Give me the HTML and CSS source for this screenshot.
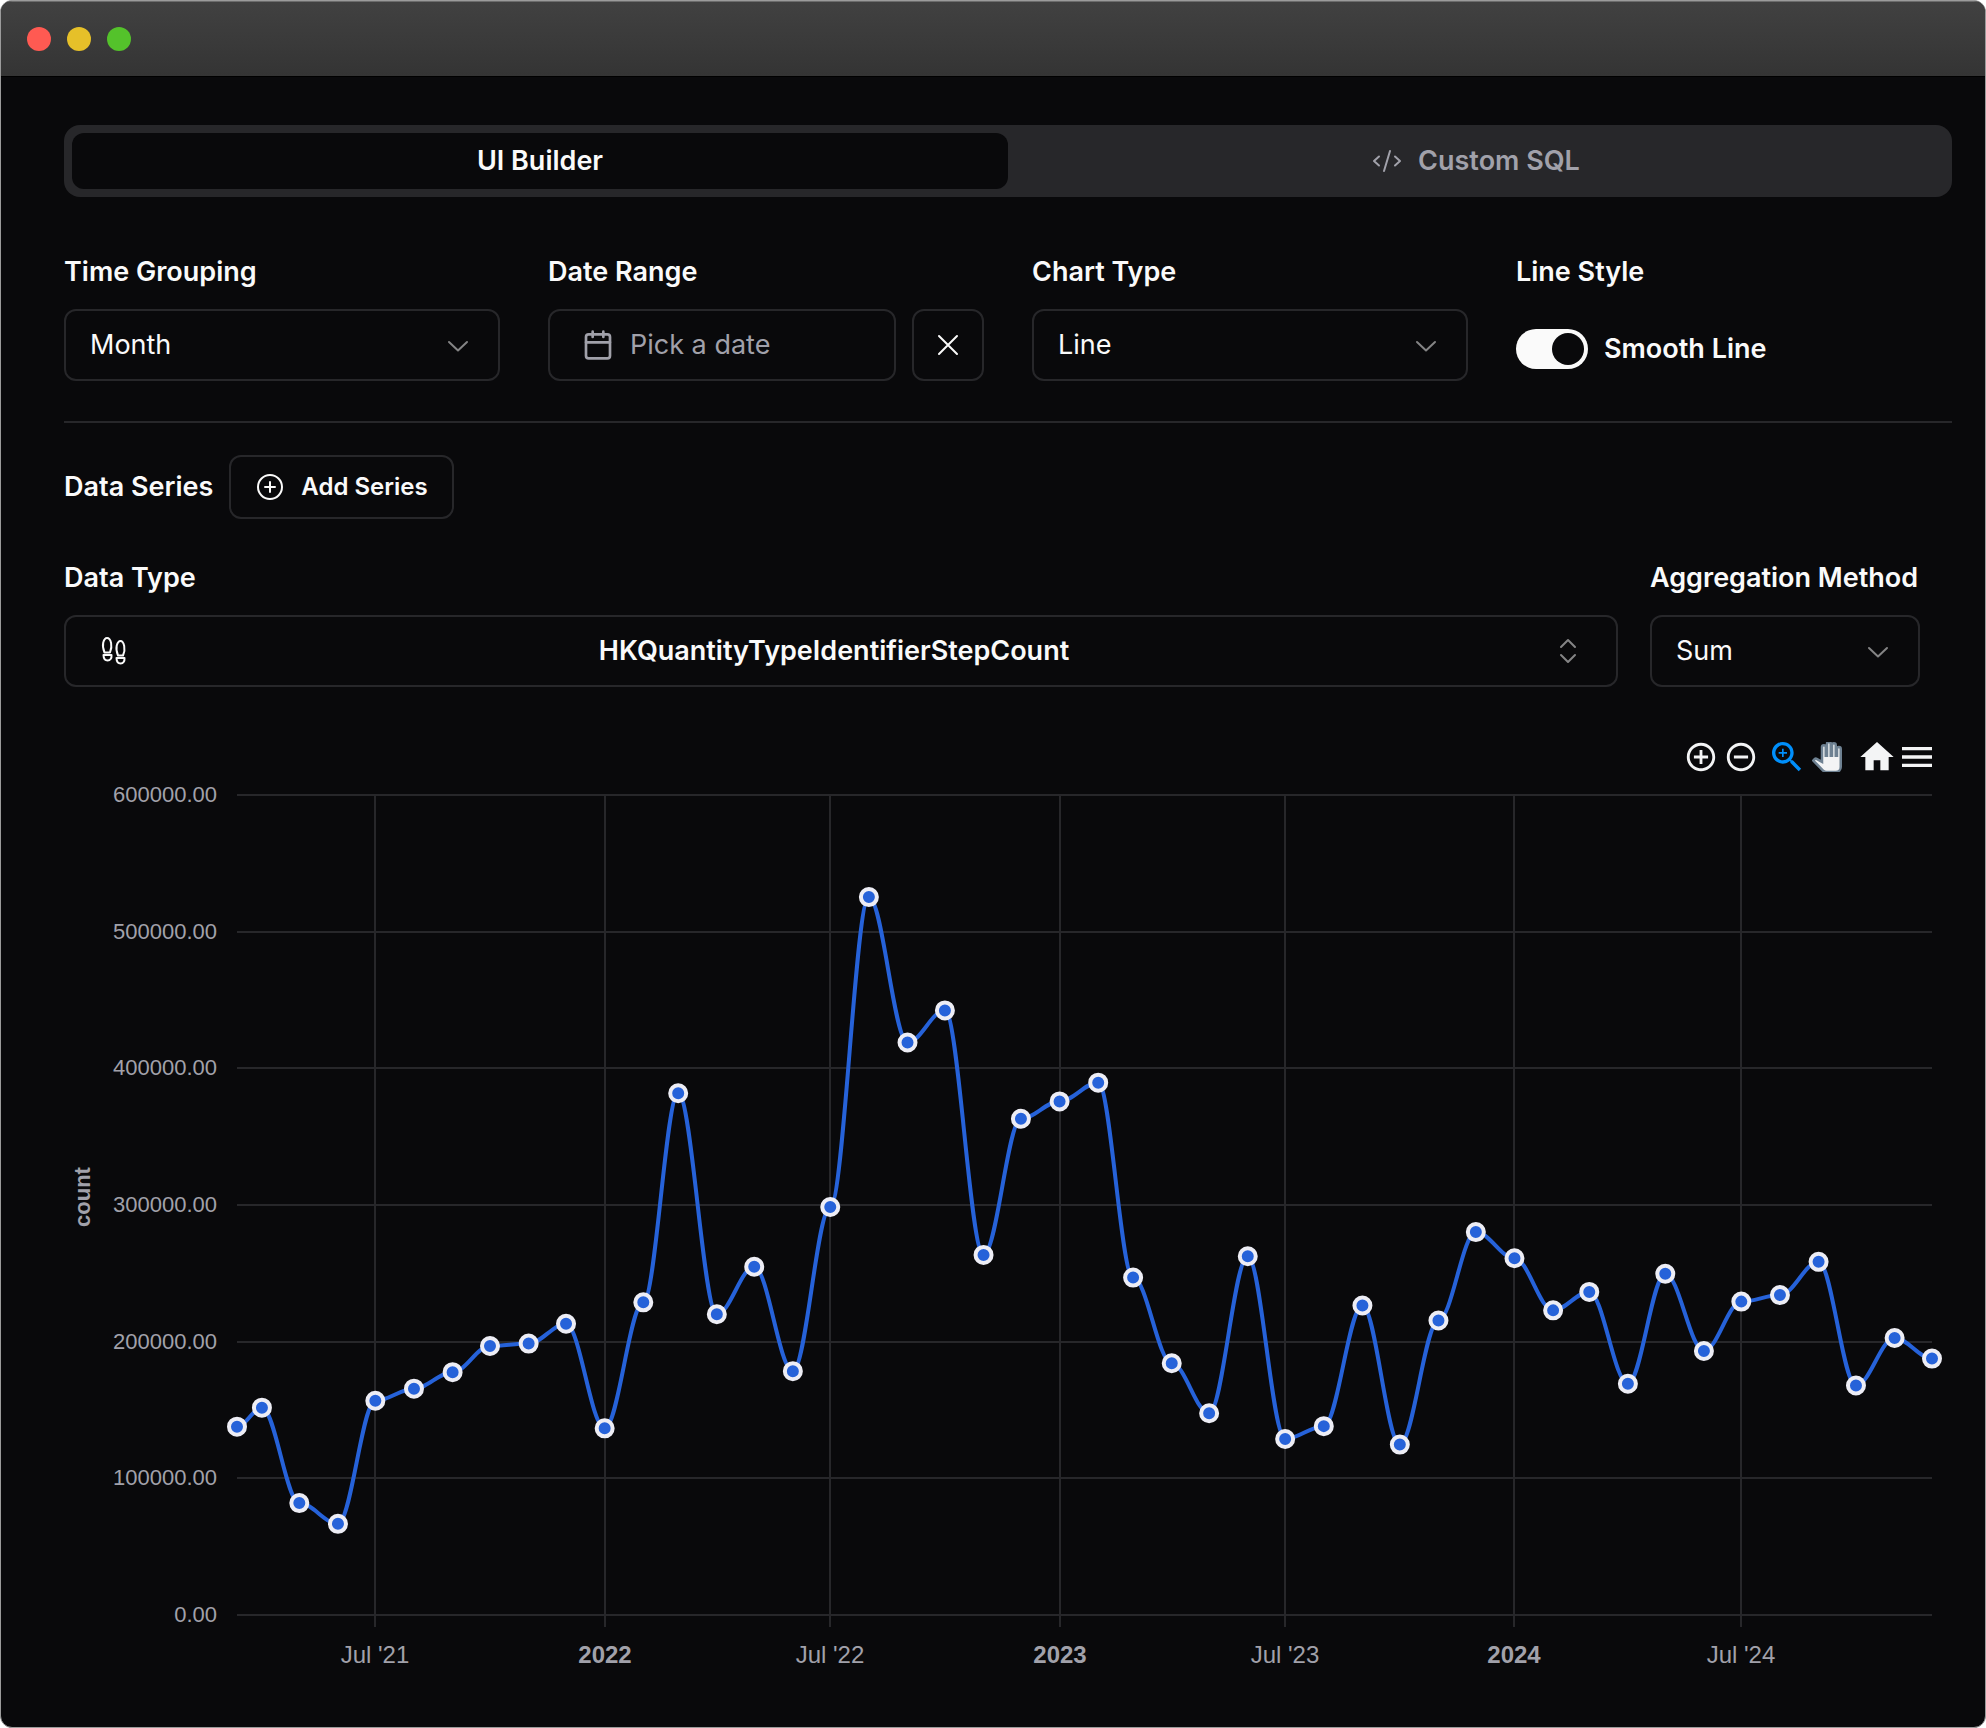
FILE: index.html
```html
<!DOCTYPE html>
<html lang="en">
<head>
<meta charset="utf-8">
<meta name="viewport" content="width=device-width, initial-scale=1">
<title>Chart Builder</title>
<link rel="stylesheet" href="styles.css">
</head>
<body>
<div class="window">
  <header class="titlebar">
    <button class="light light-close" type="button" aria-label="Close"></button>
    <button class="light light-minimize" type="button" aria-label="Minimize"></button>
    <button class="light light-zoom" type="button" aria-label="Zoom"></button>
  </header>

  <main class="content">
    <div class="tabs" role="tablist">
      <button class="tab tab-active" type="button" role="tab" aria-selected="true">UI Builder</button>
      <button class="tab" type="button" role="tab" aria-selected="false">
        <svg class="icon-30" viewBox="0 0 30 30" fill="none" stroke="currentColor" stroke-width="2" stroke-linecap="round" stroke-linejoin="round" aria-hidden="true"><path d="M7 10.500 2 15l5 4.500M23 10.500 28 15l-5 4.500M18 5 12 25"/></svg>
        Custom SQL
      </button>
    </div>

    <div class="options">
      <div class="field">
        <label class="label" for="grouping">Time Grouping</label>
        <div class="select-wrap">
          <select class="select" id="grouping"><option>Month</option></select>
          <svg class="chevron" viewBox="0 0 30 30" aria-hidden="true"><path d="m6 12 9 8.500 9-8.500"/></svg>
        </div>
      </div>
      <div class="field">
        <label class="label" for="range">Date Range</label>
        <div class="date-row">
          <button class="box date-button" id="range" type="button">
            <svg class="icon-32" viewBox="0 0 24 24" fill="none" stroke="currentColor" stroke-width="2" stroke-linecap="round" stroke-linejoin="round" aria-hidden="true"><rect x="3" y="4" width="18" height="18" rx="2"/><path d="M8 2v4M16 2v4M3 10h18"/></svg>
            Pick a date
          </button>
          <button class="box clear-button" type="button" aria-label="Clear date range">
            <svg class="icon-30" viewBox="0 0 30 30" fill="none" stroke="currentColor" stroke-width="2" stroke-linecap="round" aria-hidden="true"><path d="m6 6 18 18M24 6 6 24"/></svg>
          </button>
        </div>
      </div>
      <div class="field">
        <label class="label" for="chart-type">Chart Type</label>
        <div class="select-wrap">
          <select class="select" id="chart-type"><option>Line</option></select>
          <svg class="chevron" viewBox="0 0 30 30" aria-hidden="true"><path d="m6 12 9 8.500 9-8.500"/></svg>
        </div>
      </div>
      <div class="field">
        <span class="label">Line Style</span>
        <div class="switch-row">
          <input class="switch" id="smooth" type="checkbox" role="switch" checked>
          <label class="label" for="smooth">Smooth Line</label>
        </div>
      </div>
    </div>

    <hr class="divider">

    <div class="series-head">
      <span class="label">Data Series</span>
      <button class="box add-button" type="button">
        <svg class="icon-30" viewBox="0 0 30 30" fill="none" stroke="currentColor" stroke-width="2" stroke-linecap="round" aria-hidden="true"><circle cx="15" cy="15" r="12"/><path d="M15 10v10M10 15h10"/></svg>
        Add Series
      </button>
    </div>

    <div class="series-row">
      <div class="field">
        <label class="label" for="data-type">Data Type</label>
        <button class="box type-button" id="data-type" type="button" role="combobox" aria-expanded="false">
          <svg class="icon-32" viewBox="0 0 32 32" fill="none" stroke="currentColor" stroke-width="2" stroke-linejoin="round" aria-hidden="true">
            <path d="M6.500 17.500C5 14 4.500 11 5.200 7.800 6 4.600 7.400 3 9 3s3.400 1.800 4.100 5c.7 3.200.2 6.200-1.100 9.500z"/>
            <path d="M5.500 20h8c.3 3.400-1.200 5.500-3.900 5.500-2.600 0-4-2-4.100-5.500z"/>
            <path d="M20 20.500c-1.500-3.500-2-6.500-1.300-9.700C19.500 7.600 20.900 6 22.500 6s3 1.800 3.700 5c.7 3.200.2 6.200-1.200 9.500z"/>
            <path d="M18.500 23h8c.2 3.400-1.200 5.500-3.900 5.500-2.600 0-4-2-4.100-5.500z"/>
          </svg>
          <span>HKQuantityTypeIdentifierStepCount</span>
          <svg class="sort-icon" viewBox="0 0 30 30" aria-hidden="true"><path d="m7 11 7-7 7 7M7 19l7 7 7-7"/></svg>
        </button>
      </div>
      <div class="field">
        <label class="label" for="aggregation">Aggregation Method</label>
        <div class="select-wrap">
          <select class="select" id="aggregation"><option>Sum</option></select>
          <svg class="chevron" viewBox="0 0 30 30" aria-hidden="true"><path d="m6 12 9 8.500 9-8.500"/></svg>
        </div>
      </div>
    </div>

    <div class="toolbar">
      <div class="tool-group">
        <button class="tool" type="button" aria-label="Zoom in"><svg class="icon-34" viewBox="0 0 24 24"><path d="M13 7h-2v4H7v2h4v4h2v-4h4v-2h-4V7zm-1-5C6.480 2 2 6.480 2 12s4.480 10 10 10 10-4.480 10-10S17.520 2 12 2zm0 18c-4.410 0-8-3.590-8-8s3.590-8 8-8 8 3.590 8 8-3.590 8-8 8z"/></svg></button>
        <button class="tool" type="button" aria-label="Zoom out"><svg class="icon-34" viewBox="0 0 24 24"><path d="M7 11v2h10v-2H7zm5-9C6.480 2 2 6.480 2 12s4.480 10 10 10 10-4.480 10-10S17.520 2 12 2zm0 18c-4.410 0-8-3.590-8-8s3.590-8 8-8 8 3.590 8 8-3.590 8-8 8z"/></svg></button>
      </div>
      <div class="tool-group tool-group-modes">
        <button class="tool tool-selected" type="button" aria-label="Selection zoom"><svg class="icon-40" viewBox="0 0 24 24"><path d="M15.500 14h-.79l-.28-.27C15.410 12.590 16 11.110 16 9.500 16 5.910 13.090 3 9.500 3S3 5.910 3 9.500 5.910 16 9.500 16c1.610 0 3.090-.59 4.230-1.570l.27.28v.79l5 4.990L20.490 19l-4.990-5zm-6 0C7.010 14 5 11.990 5 9.500S7.010 5 9.500 5 14 7.010 14 9.500 11.990 14 9.500 14z"/><path d="M12 10h-2v2H9v-2H7V9h2V7h1v2h2v1z"/></svg></button>
        <button class="tool tool-pan" type="button" aria-label="Pan"><svg class="icon-30" viewBox="0 0 24 24"><path d="M23 5.500V20c0 2.200-1.800 4-4 4h-7.300c-1.080 0-2.100-.43-2.850-1.190L1 14.830s1.260-1.230 1.300-1.250c.22-.19.49-.29.79-.29.22 0 .42.06.6.16.04.01 4.310 2.460 4.310 2.460V4c0-.83.67-1.500 1.500-1.500S11 3.170 11 4v7h1V1.500c0-.83.67-1.500 1.500-1.500S15 .67 15 1.500V11h1V2.500c0-.83.67-1.500 1.500-1.500s1.500.67 1.500 1.500V11h1V5.500c0-.83.67-1.500 1.500-1.500s1.500.67 1.500 1.500z"/></svg></button>
      </div>
      <div class="tool-group">
        <button class="tool" type="button" aria-label="Reset zoom"><svg class="icon-40" viewBox="0 0 24 24"><path d="M10 20v-6h4v6h5v-8h3L12 3 2 12h3v8z"/></svg></button>
        <button class="tool" type="button" aria-label="Menu"><svg class="icon-40" viewBox="0 0 24 24"><path d="M3 18h18v-2H3v2zm0-5h18v-2H3v2zm0-7v2h18V6H3z"/></svg></button>
      </div>
    </div>
    <svg class="chart" id="chart" role="img" aria-label="Step count per month"></svg>
  </main>
</div>
<script src="chart.js"></script>
</body>
</html>
```

FILE: styles.css
```css
* {
  box-sizing: border-box;
}

html {
  background: #ffffff;
}

body {
  margin: 0;
  font-family: Inter, "Liberation Sans", sans-serif;
  font-size: 27px;
  line-height: 30px;
  color: #fafafa;
}

button,
select {
  font: inherit;
  color: inherit;
}

button {
  cursor: pointer;
}

svg {
  display: block;
  flex: none;
}

.window {
  display: flex;
  flex-direction: column;
  min-height: 100vh;
  border: 1px solid #9b9b9b;
  border-radius: 12px;
  background: #09090b;
  overflow: hidden;
}

.titlebar {
  display: flex;
  align-items: center;
  gap: 16px;
  height: 76px;
  padding: 0 26px;
  background: linear-gradient(#414141, #343434);
  border-top: 1px solid #6c6c6c;
  border-bottom: 1px solid #000000;
}

.light {
  width: 24px;
  height: 24px;
  padding: 0;
  border: 0;
  border-radius: 50%;
}

.light-close {
  background: #ff5a52;
}

.light-minimize {
  background: #e6c029;
}

.light-zoom {
  background: #54c22b;
}

.content {
  flex: 1;
  padding: 48px 33px 24px 63px;
}

.tabs {
  display: grid;
  grid-template-columns: 1fr 1fr;
  height: 72px;
  padding: 8px;
  border-radius: 16px;
  background: #27272a;
}

.tab {
  display: flex;
  align-items: center;
  justify-content: center;
  gap: 16px;
  padding: 0;
  border: 0;
  border-radius: 12px;
  background: none;
  color: #a1a1aa;
  font-weight: 600;
}

.tab-active {
  background: #09090b;
  color: #fafafa;
}

.options {
  display: grid;
  grid-template-columns: repeat(4, 1fr);
  gap: 48px;
  margin-top: 60px;
}

.field {
  display: flex;
  flex-direction: column;
  gap: 22px;
  min-width: 0;
}

.label {
  font-weight: 600;
  white-space: nowrap;
}

.box,
.select {
  height: 72px;
  border: 2px solid #27272a;
  border-radius: 12px;
  background: transparent;
}

.box {
  display: flex;
  align-items: center;
  font-weight: 600;
}

.select-wrap {
  display: grid;
  align-items: center;
}

.select-wrap > * {
  grid-area: 1 / 1;
}

.select {
  width: 100%;
  padding: 0 24px;
  appearance: none;
}

.chevron {
  justify-self: end;
  width: 30px;
  height: 30px;
  margin-right: 27px;
  pointer-events: none;
}

.chevron,
.sort-icon {
  fill: none;
  stroke: #848485;
  stroke-width: 2;
  stroke-linecap: round;
  stroke-linejoin: round;
}

.sort-icon {
  width: 30px;
  height: 30px;
  margin-left: 16px;
}

.date-row {
  display: flex;
  gap: 16px;
}

.date-button {
  flex: 1;
  gap: 16px;
  padding: 0 32px;
  color: #a1a1aa;
  font-weight: 400;
}

.clear-button {
  justify-content: center;
  width: 72px;
  padding: 0;
}

.switch-row {
  display: flex;
  align-items: center;
  gap: 16px;
  height: 80px;
}

.switch {
  display: flex;
  align-items: center;
  justify-content: flex-end;
  width: 72px;
  height: 40px;
  margin: 0;
  padding: 4px;
  border-radius: 20px;
  background: #fafafa;
  appearance: none;
}

.switch::before {
  content: "";
  width: 32px;
  height: 32px;
  border-radius: 50%;
  background: #09090b;
}

.switch:not(:checked) {
  justify-content: flex-start;
  background: #27272a;
}

.divider {
  height: 2px;
  margin: 32px 0;
  border: 0;
  background: #27272a;
}

.series-head {
  display: flex;
  align-items: center;
  gap: 16px;
}

.add-button {
  gap: 16px;
  height: 64px;
  padding: 0 24px;
  font-size: 24px;
}

.series-row {
  display: grid;
  grid-template-columns: 1fr 270px;
  gap: 32px;
  margin-top: 44px;
  padding-right: 32px;
}

.type-button {
  justify-content: space-between;
  padding: 0 32px;
}

.icon-30 {
  width: 30px;
  height: 30px;
}

.icon-32 {
  width: 32px;
  height: 32px;
}

.icon-34 {
  width: 34px;
  height: 34px;
}

.icon-40 {
  width: 40px;
  height: 40px;
}

.toolbar {
  display: flex;
  justify-content: flex-end;
  margin: 50px 0 2px;
  padding-right: 15px;
}

.tool-group {
  display: flex;
}

.tool-group-modes {
  margin: 0 10px 0 6px;
}

.tool {
  display: flex;
  align-items: center;
  justify-content: center;
  width: 40px;
  height: 40px;
  padding: 0;
  border: 0;
  background: none;
  fill: #f3f4f5;
}

.tool-selected {
  fill: #008ffb;
}

.tool-pan {
  stroke: #6e8192;
  stroke-width: 2;
}

.chart {
  width: 100%;
  height: 900px;
  font-family: "Liberation Sans", Arial, sans-serif;
  font-size: 22px;
}

.grid-line {
  stroke: #27272a;
  stroke-width: 2;
}

.series-line {
  fill: none;
  stroke: #2662d9;
  stroke-width: 4;
}

.marker {
  fill: #2662d9;
  stroke: #ededf5;
  stroke-width: 4;
}

.axis-text {
  fill: #a1a1aa;
}

.axis-time {
  font-size: 24px;
  text-anchor: middle;
}

.axis-value {
  text-anchor: end;
}

.axis-strong {
  font-weight: 700;
  text-anchor: middle;
}
```

FILE: chart.js
```js
// Monthly totals, starting with the first recorded day.
const firstDay = Date.UTC(2021, 2, 12);
const totals = [
  137800, 151700, 81900, 66700, 156800, 165600, 177700, 196800, 198600, 213100,
  136600, 228800, 381800, 220100, 254800, 178400, 298500, 525300, 418900, 442400, 263500, 363100,
  375800, 389500, 246900, 184200, 147600, 262500, 128800, 138200, 226500, 124700, 215500, 280200,
  261000, 222900, 236400, 169200, 249700, 193200, 229300, 234100, 258400, 167900, 202700, 187600
];
const dates = totals.map((_, i) => (i === 0 ? firstDay : Date.UTC(2021, 2 + i, 1)));
const ticks = [
  ["Jul '21", 2021, 6], ["2022", 2022, 0], ["Jul '22", 2022, 6], ["2023", 2023, 0],
  ["Jul '23", 2023, 6], ["2024", 2024, 0], ["Jul '24", 2024, 6]
];
const maxValue = 600000;
const chart = document.getElementById("chart");
const smooth = document.getElementById("smooth");

function add(name, attributes, text) {
  const node = document.createElementNS("http://www.w3.org/2000/svg", name);
  for (const key in attributes) node.setAttribute(key, attributes[key]);
  if (text) node.textContent = text;
  chart.appendChild(node);
}

function draw() {
  chart.replaceChildren();
  const left = 173;
  const right = chart.clientWidth - 20;
  const top = 16;
  const bottom = 836;
  const span = dates[dates.length - 1] - firstDay;
  const xOf = (date) => left + ((date - firstDay) / span) * (right - left);
  const yOf = (value) => bottom - (value / maxValue) * (bottom - top);

  for (let value = 0; value <= maxValue; value += 100000) {
    const y = Math.round(yOf(value));
    add("line", { class: "grid-line", x1: left, x2: right, y1: y, y2: y });
    add("text", { class: "axis-text axis-value", x: left - 20, y: y + 7 }, value.toFixed(2));
  }
  for (const [name, year, month] of ticks) {
    const x = Math.round(xOf(Date.UTC(year, month, 1)));
    add("line", { class: "grid-line", x1: x, x2: x, y1: top, y2: bottom + 12 });
    add("text", { class: "axis-text axis-time" + (month ? "" : " axis-strong"), x, y: bottom + 48 }, name);
  }
  add("text", { class: "axis-text axis-strong", transform: "translate(26 418) rotate(-90)" }, "count");

  const points = totals.map((value, i) => [xOf(dates[i]), yOf(value)]);
  let path = "M" + points[0];
  for (let i = 1; i < points.length; i++) {
    const [px, py] = points[i - 1];
    const [x, y] = points[i];
    const reach = smooth.checked ? (x - px) * 0.35 : 0;
    path += ` C${px + reach},${py} ${x - reach},${y} ${x},${y}`;
  }
  add("path", { class: "series-line", d: path });
  for (const [cx, cy] of points) add("circle", { class: "marker", cx, cy, r: 8 });
}

draw();
smooth.addEventListener("change", draw);
window.addEventListener("resize", draw);
```
